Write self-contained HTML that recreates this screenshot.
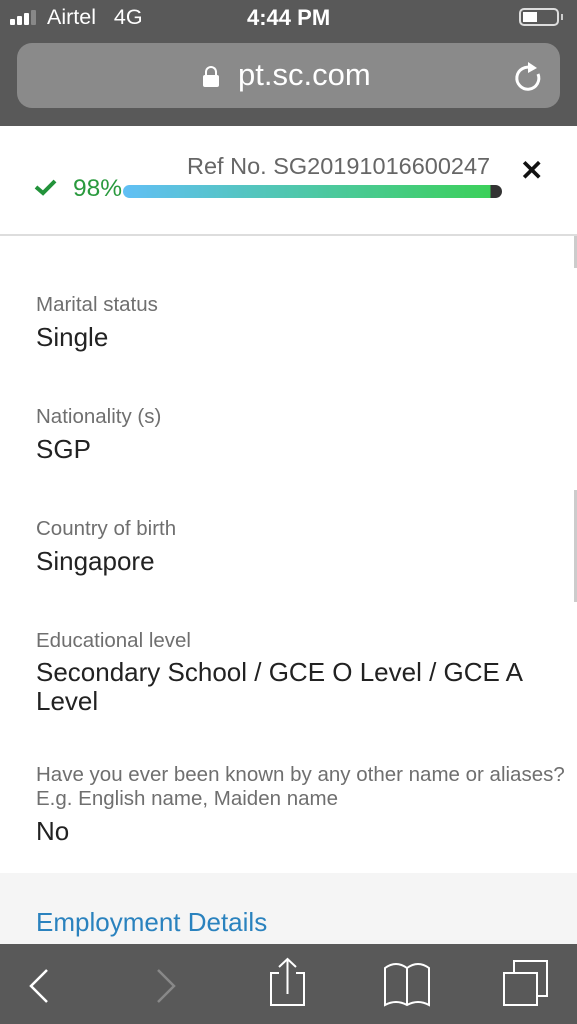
<!DOCTYPE html>
<html><head><style>
body{margin:0;width:577px;height:1024px;position:relative;overflow:hidden;background:#fff;font-family:"Liberation Sans",sans-serif}
.a{position:absolute;white-space:nowrap}
.lab{left:36px;font-size:20.5px;color:#6f6f6f}
.val{left:36px;font-size:26px;color:#222}
</style></head><body>
<div class="a" style="left:0;top:0;width:577px;height:126px;background:#595959"></div>
<div class="a" style="left:10px;top:12px;width:30px;height:14px">
<div class="a" style="left:0;top:7px;width:5px;height:6px;background:#fff;border-radius:1px"></div>
<div class="a" style="left:7px;top:4px;width:5px;height:9px;background:#fff;border-radius:1px"></div>
<div class="a" style="left:14px;top:1px;width:5px;height:12px;background:#fff;border-radius:1px"></div>
<div class="a" style="left:21px;top:-2px;width:5px;height:15px;background:#888;border-radius:1px"></div>
</div>
<div class="a" style="left:47px;top:5px;font-size:21.5px;color:#fff">Airtel&nbsp;&nbsp;&nbsp;4G</div>
<div class="a" style="left:247px;top:5px;font-size:22px;color:#fff;font-weight:bold">4:44 PM</div>
<div class="a" style="left:519px;top:8px;width:40px;height:18px;border:2px solid #ddd;border-radius:5px;box-sizing:border-box"><div style="margin:2px;width:14px;height:10px;background:#fff"></div></div>
<div class="a" style="left:561px;top:14px;width:2px;height:6px;background:#ccc"></div>
<div class="a" style="left:17px;top:43px;width:543px;height:65px;background:#8a8a8a;border-radius:15px"></div>
<div class="a" style="left:203px;top:66px;width:16px;height:21px">
<div class="a" style="left:2px;top:0;width:8px;height:10px;border:2px solid #fff;border-radius:6px 6px 0 0;border-bottom:none"></div>
<div class="a" style="left:0;top:9px;width:16px;height:12px;background:#fff;border-radius:2px"></div></div>
<div class="a" style="left:238px;top:57px;font-size:31px;color:#fff">pt.sc.com</div>
<svg class="a" style="left:513px;top:60px" width="30" height="32" viewBox="0 0 30 32"><path d="M19 8 A11 11 0 1 0 25 14" fill="none" stroke="#fff" stroke-width="3"/><path d="M15 2 L24 8 L15 13 Z" fill="#fff"/></svg>
<div class="a" style="left:0;top:234px;width:577px;height:2px;background:#ddd"></div>
<div class="a" style="left:187px;top:153px;font-size:23.5px;color:#666">Ref No. SG20191016600247</div>
<div class="a" style="left:520px;top:154px;font-size:28px;color:#111;font-weight:bold">✕</div>
<svg class="a" style="left:34px;top:178px" width="24" height="18" viewBox="0 0 24 18"><path d="M2 9 L9 15 L21 3" fill="none" stroke="#22923a" stroke-width="4"/></svg>
<div class="a" style="left:73px;top:175px;font-size:24.5px;color:#2a9a3e">98%</div>
<div class="a" style="left:123px;top:185px;width:379px;height:13px;border-radius:7px;background:linear-gradient(90deg,#61bff5,#3cd05a 97%,#333 97%)"></div>
<div class="a" style="left:574px;top:236px;width:3px;height:32px;background:#ccc"></div>
<div class="a" style="left:574px;top:490px;width:3px;height:112px;background:#ccc"></div>
<div class="a lab" style="top:293px">Marital status</div>
<div class="a val" style="top:322px">Single</div>
<div class="a lab" style="top:405px">Nationality (s)</div>
<div class="a val" style="top:434px">SGP</div>
<div class="a lab" style="top:517px">Country of birth</div>
<div class="a val" style="top:546px">Singapore</div>
<div class="a lab" style="top:629px">Educational level</div>
<div class="a val" style="top:658px;line-height:29px">Secondary School / GCE O Level / GCE A<br>Level</div>
<div class="a lab" style="top:763px;line-height:24px">Have you ever been known by any other name or aliases?<br>E.g. English name, Maiden name</div>
<div class="a val" style="top:816px">No</div>
<div class="a" style="left:0;top:873px;width:577px;height:71px;background:#f5f5f5"></div>
<div class="a" style="left:36px;top:907px;font-size:26px;color:#2a82be">Employment Details</div>
<div class="a" style="left:0;top:944px;width:577px;height:80px;background:#595959"></div>
<svg class="a" style="left:0;top:944px" width="577" height="80" viewBox="0 0 577 80">
<g fill="none" stroke-width="2.5"><path d="M47 26 L31 42 L47 58" stroke="#fff"/><path d="M158 26 L174 42 L158 58" stroke="#888"/>
<g stroke="#fff" stroke-width="2"><path d="M279 29 H271 V61 H304 V29 H296"/><path d="M287.5 50 V15 M279 23 L287.5 15 L296 23"/>
<path d="M385 61 V24 Q396 16 407 24 Q418 16 429 24 V61 Q418 55 407 61 Q396 55 385 61 Z M407 24 V61"/>
<path d="M504 29 H537 V61 H504 Z M514 29 V17 H547 V52 H537"/></g></g></svg>
</body></html>
